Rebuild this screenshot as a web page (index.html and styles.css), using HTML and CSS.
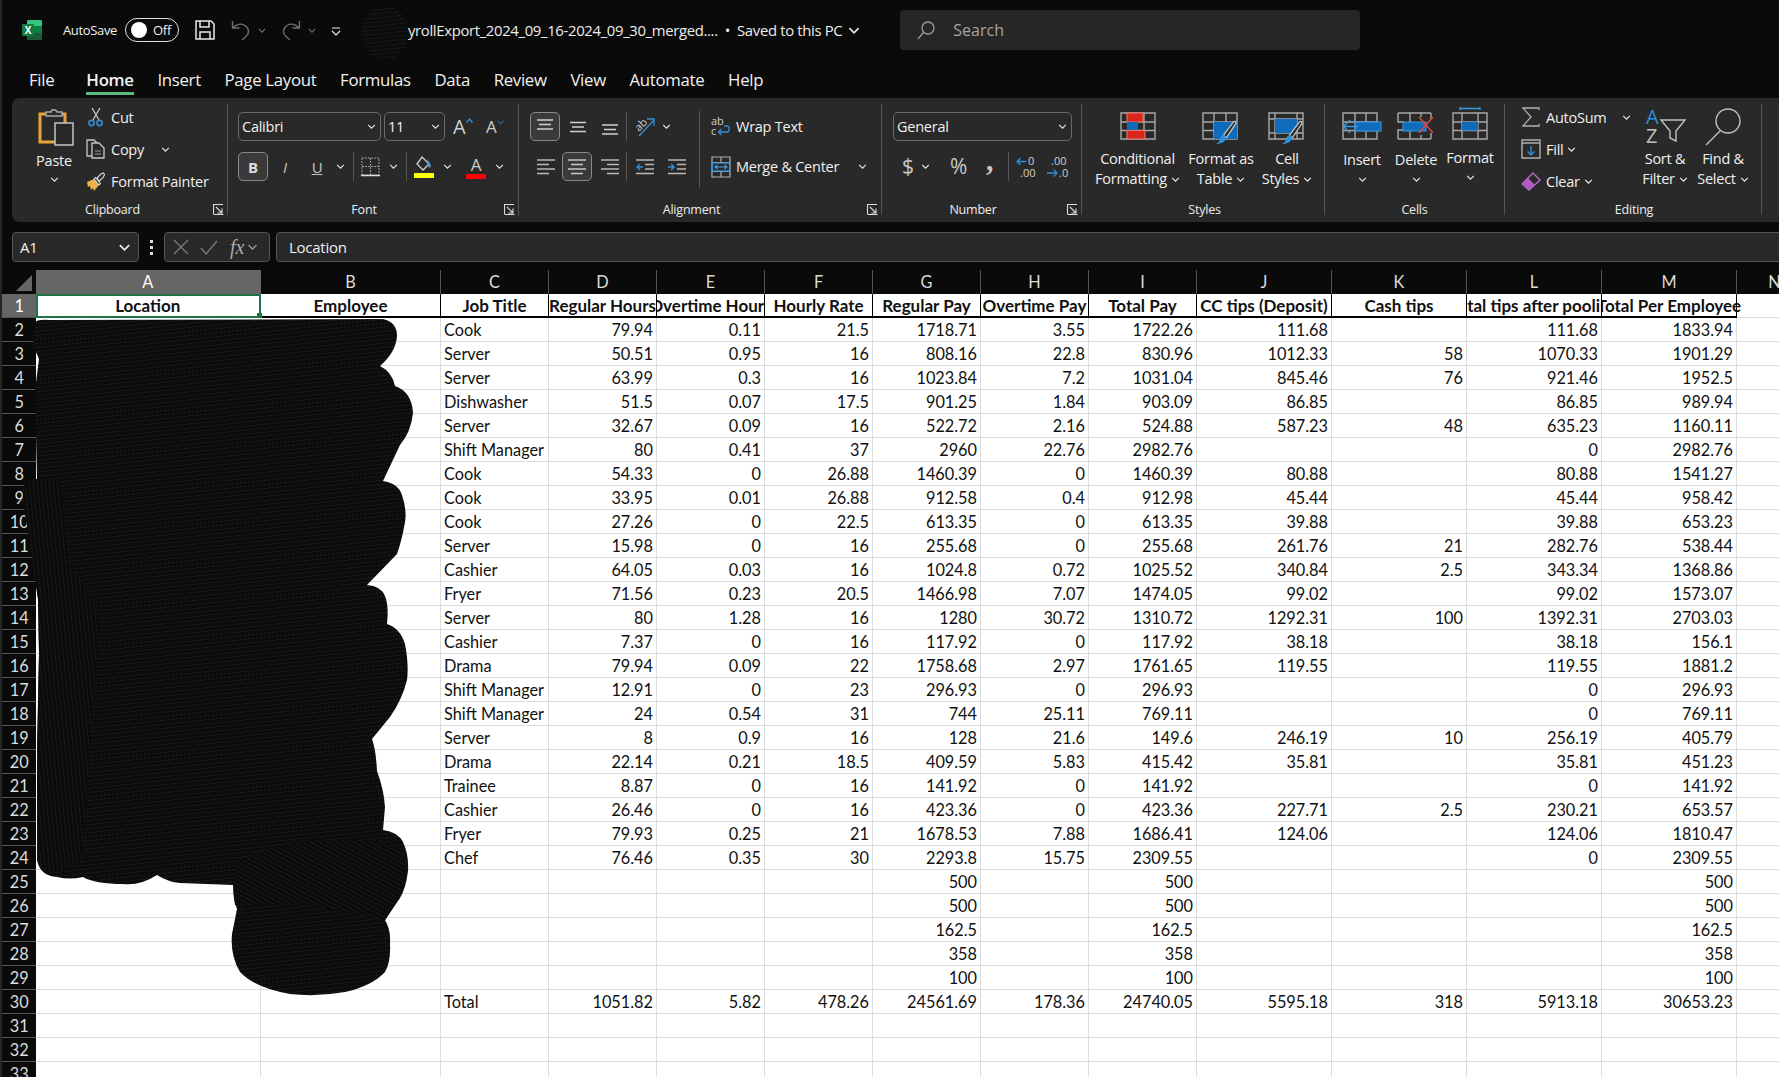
FILE: index.html
```html
<!DOCTYPE html>
<html lang="en">
<head>
<meta charset="utf-8">
<title>Excel</title>
<link rel="stylesheet" href="styles.css">
</head>
<body>
<svg class="defs" aria-hidden="true">
  <defs>
    <pattern id="scribble" width="4" height="4" patternUnits="userSpaceOnUse" patternTransform="rotate(-6)">
      <rect width="4" height="4" fill="#0a0a0a"/>
      <rect x="0" y="1" width="1" height="1" fill="#2c2c2c"/>
      <rect x="2" y="1" width="1" height="1" fill="#242424"/>
      <rect x="1" y="3" width="1" height="1" fill="#1a1a1a"/>
    </pattern>
    <pattern id="scribbleV" width="4" height="4" patternUnits="userSpaceOnUse" patternTransform="rotate(84)">
      <rect width="4" height="4" fill="#0a0a0a"/>
      <rect x="0" y="1" width="1" height="1" fill="#2a2a2a"/>
      <rect x="2" y="1" width="1" height="1" fill="#242424"/>
    </pattern>
    <pattern id="scribbleD" width="4" height="4" patternUnits="userSpaceOnUse" patternTransform="rotate(28)">
      <rect width="4" height="4" fill="#0a0a0a"/>
      <rect x="0" y="1" width="1" height="1" fill="#2a2a2a"/>
      <rect x="2" y="1" width="1" height="1" fill="#242424"/>
    </pattern>
    <symbol id="chev" viewBox="0 0 10 6"><path d="M1 1l4 4 4-4" fill="none" stroke="currentColor" stroke-width="1.4"/></symbol>
    <symbol id="launch" viewBox="0 0 11 11"><path d="M.5 10V.5H10M3 3l6 6M9 4.5V9H4.5M.5 10.5h10" fill="none" stroke="#ddd" stroke-width="1.1"/></symbol>
    <symbol id="atop" viewBox="0 0 18 18"><path d="M1 2H17M3 6.5H15M1 11H17" stroke="#d0d0d0" stroke-width="1.5"/></symbol>
    <symbol id="amid" viewBox="0 0 18 18"><path d="M1 4.5H17M3 9H15M1 13.5H17" stroke="#d0d0d0" stroke-width="1.5"/></symbol>
    <symbol id="abot" viewBox="0 0 18 18"><path d="M1 7H17M3 11.5H15M1 16H17" stroke="#d0d0d0" stroke-width="1.5"/></symbol>
    <symbol id="aleft" viewBox="0 0 18 18"><path d="M0 2H18M0 6.5H12M0 11H18M0 15.5H12" stroke="#b8b8b8" stroke-width="1.6"/></symbol>
    <symbol id="acent" viewBox="0 0 18 18"><path d="M0 2H18M3 6.5H15M0 11H18M3 15.5H15" stroke="#c8c8c8" stroke-width="1.6"/></symbol>
    <symbol id="aright" viewBox="0 0 18 18"><path d="M0 2H18M6 6.5H18M0 11H18M6 15.5H18" stroke="#b8b8b8" stroke-width="1.6"/></symbol>
    <symbol id="brush" viewBox="0 0 20 24"><path d="M19 1.5c.7.6.7 1.4.2 2.2L10.5 17l-3-2.3L17 2c.6-.7 1.3-1 2-.5z" fill="#292929" stroke="#c8c8c8" stroke-width="1.2"/><path d="M6 15c2-1.500 4.500 0 4 2.500-.6 3.500-5 5.500-9.500 5.500 2.500-1.500 3.500-2.500 3.700-4.700C4.300 17 5 15.800 6 15z" fill="#2f8fd8"/></symbol>
  </defs>
</svg>

<div class="app">
  <header class="titlebar">
    <svg class="xl" width="20" height="20" viewBox="0 0 20 20"><rect x="5" width="15" height="20" rx="1.500" fill="#21a366"/><rect x="5" width="15" height="6" rx="1.500" fill="#33c481"/><rect x="12" y="6" width="8" height="7" fill="#107c41"/><rect x="5" y="13" width="15" height="7" rx="1" fill="#185c37"/><rect y="4" width="12" height="12" rx="1" fill="#107c41"/><text x="6" y="13.500" class="xl-x">X</text></svg>
    <span class="autosave">AutoSave</span>
    <span class="toggle"><i class="knob"></i><span>Off</span></span>
    <svg class="save" width="20" height="20" viewBox="0 0 20 20"><path d="M1 1h15l3 3v15H1zM5 1v6h9V1M5 19v-7h10v7" fill="none" stroke="#e8e8e8" stroke-width="1.500"/></svg>
    <svg class="undo" width="20" height="20" viewBox="0 0 20 20"><path d="M1.500 1v7h7M2 8c3-4 8-5 12-2.500 4.500 3 4.500 8 1 11L11 20" fill="none" stroke="#6e6e6e" stroke-width="1.400"/></svg>
    <svg class="qchev" width="8" height="5"><use href="#chev"/></svg>
    <svg class="redo" width="20" height="20" viewBox="0 0 20 20"><path d="M18.500 1v7h-7M18 8c-3-4-8-5-12-2.500-4.500 3-4.500 8-1 11L9 20" fill="none" stroke="#6e6e6e" stroke-width="1.400"/></svg>
    <svg class="qchev" width="8" height="5"><use href="#chev"/></svg>
    <svg class="custom" width="10" height="9" viewBox="0 0 10 9"><path d="M1 1h8M1 4l4 4 4-4" fill="none" stroke="#e8e8e8" stroke-width="1.200"/></svg>
    <svg class="tblob" width="46" height="54" viewBox="0 0 46 54"><ellipse cx="23" cy="27" rx="23" ry="27" fill="url(#scribble)"/></svg>
    <span class="doc">yrollExport_2024_09_16-2024_09_30_merged.... &nbsp;• &nbsp;Saved to this PC</span>
    <svg class="docchev" width="12" height="7"><use href="#chev"/></svg>
    <div class="search">
      <svg width="18" height="19" viewBox="0 0 18 19"><circle cx="11" cy="7" r="6" fill="none" stroke="#9a9a9a" stroke-width="1.300"/><path d="M6.500 11.500L1 18" stroke="#9a9a9a" stroke-width="1.300"/></svg>
      <span>Search</span>
    </div>
  </header>

  <nav class="tabs">
    <span class="filetab">File</span><span class="on">Home</span><span>Insert</span><span>Page Layout</span><span>Formulas</span><span>Data</span><span>Review</span><span>View</span><span>Automate</span><span>Help</span>
  </nav>

  <section class="ribbon">
    <div class="group g-clip">
      <div class="body row">
        <div class="paste">
          <svg width="36" height="38" viewBox="0 0 36 38"><path d="M2 6h25v28H2z" fill="none" stroke="#e8a33d" stroke-width="3"/><path d="M8 8V4h5c.5-3 5-3 6 0h5v4z" fill="#292929" stroke="#a8a8a8" stroke-width="1.400"/><rect x="17" y="15" width="18" height="22" fill="#292929" stroke="#c4c4c4" stroke-width="1.500"/></svg>
          <span class="ptext">Paste</span>
          <svg class="chev" width="9" height="5"><use href="#chev"/></svg>
        </div>
        <div class="stack">
          <div class="line"><svg width="20" height="20" viewBox="0 0 20 20"><path d="M6 1l7 12M14 1L7 13" stroke="#c8c8c8" stroke-width="1.300"/><circle cx="5.500" cy="16" r="2.600" fill="none" stroke="#2f8fd8" stroke-width="1.600"/><circle cx="13.500" cy="16" r="2.600" fill="none" stroke="#2f8fd8" stroke-width="1.600"/></svg><span>Cut</span></div>
          <div class="line"><svg width="20" height="20" viewBox="0 0 20 20"><path d="M7 17H1V1h7l3 3" fill="none" stroke="#c8c8c8" stroke-width="1.300"/><path d="M6 4h7l5 5v10H6z" fill="#292929" stroke="#c8c8c8" stroke-width="1.300"/><path d="M9 12h6M9 15h6" stroke="#999" stroke-width="1.200"/></svg><span>Copy</span><svg class="chev copychev" width="9" height="5"><use href="#chev"/></svg></div>
          <div class="line"><svg width="20" height="20" viewBox="0 0 20 20"><path d="M1 11l7-3 5 6-5 6-1-3-2 2-1-4-2 1z" fill="#f0b04a"/><path d="M8 8l5 6 1.500-1.500-5-6zM11 7l4-4 2.500-1 1 1.500-1 2.500-4 4z" fill="#292929" stroke="#d8d8d8" stroke-width="1.100"/></svg><span>Format Painter</span></div>
        </div>
      </div>
      <div class="glabel">Clipboard</div>
      <svg class="launcher" width="11" height="11"><use href="#launch"/></svg>
    </div>

    <div class="group g-font">
      <div class="body rows">
        <div class="brow">
          <div class="combo w-name"><span>Calibri</span><svg width="9" height="5"><use href="#chev"/></svg></div>
          <div class="combo w-size"><span>11</span><svg width="9" height="5"><use href="#chev"/></svg></div>
          <span class="growA big">A<svg width="7" height="5" viewBox="0 0 7 5"><path d="M.5 4.500L3.500 1l3 3.500" fill="none" stroke="#2f8fd8" stroke-width="1.300"/></svg></span>
          <span class="growA small">A<svg width="7" height="5"><use href="#chev"/></svg></span>
        </div>
        <div class="brow">
          <span class="box bold">B</span>
          <span class="fmt ital">I</span>
          <span class="fmt under">U</span>
          <svg class="chev m-u" width="9" height="5"><use href="#chev"/></svg>
          <i class="vsep s-u"></i>
          <svg class="b-icon" width="19" height="20" viewBox="0 0 19 20"><path d="M1 1h17v17H1zM9.500 1v17M1 9.500h17" fill="none" stroke="#9a9a9a" stroke-width="1" stroke-dasharray="2 1"/><path d="M0 18.500h19" stroke="#e0e0e0" stroke-width="1.500"/></svg>
          <svg class="chev m-b" width="9" height="5"><use href="#chev"/></svg>
          <i class="vsep s-b"></i>
          <svg class="f-icon" width="20" height="22" viewBox="0 0 20 22"><path d="M8 1l7 7-6 6-6-6z" fill="none" stroke="#d0d0d0" stroke-width="1.300"/><path d="M13 3l2 3c2 2 2 5 1 6-2-1-2-4-3-9z" fill="#5aa0dc"/><rect y="17" width="20" height="5" fill="#ffff00"/></svg>
          <svg class="chev m-f" width="9" height="5"><use href="#chev"/></svg>
          <span class="colorA">A<i></i></span>
          <svg class="chev m-a" width="9" height="5"><use href="#chev"/></svg>
        </div>
      </div>
      <div class="glabel">Font</div>
      <svg class="launcher" width="11" height="11"><use href="#launch"/></svg>
    </div>

    <div class="group g-align">
      <div class="body row">
        <div class="rows">
          <div class="brow">
            <span class="box"><svg width="18" height="18"><use href="#atop"/></svg></span>
            <span class="slot"><svg width="18" height="18"><use href="#amid"/></svg></span>
            <span class="slot"><svg width="18" height="18"><use href="#abot"/></svg></span>
            <i class="vsep tall"></i>
            <svg class="orient" width="22" height="22" viewBox="0 0 22 22"><text x="2" y="13" class="mini" transform="rotate(-45 7 11)">ab</text><path d="M5 20L20 4M13 3h7v7" fill="none" stroke="#2f8fd8" stroke-width="1.300"/></svg>
            <svg class="chev orient-c" width="9" height="5"><use href="#chev"/></svg>
          </div>
          <div class="brow">
            <span class="slot"><svg width="18" height="18"><use href="#aleft"/></svg></span>
            <span class="box"><svg width="18" height="18"><use href="#acent"/></svg></span>
            <span class="slot"><svg width="18" height="18"><use href="#aright"/></svg></span>
            <i class="vsep tall"></i>
            <svg class="ind" width="18" height="18" viewBox="0 0 18 18"><path d="M0 2H18M9 6.500H18M9 11H18M0 15.500H18" stroke="#b8b8b8" stroke-width="1.500"/><path d="M7 9H1M4 6L1 9l3 3" fill="none" stroke="#2f8fd8" stroke-width="1.400"/></svg>
            <svg class="ind" width="18" height="18" viewBox="0 0 18 18"><path d="M0 2H18M9 6.500H18M9 11H18M0 15.500H18" stroke="#b8b8b8" stroke-width="1.500"/><path d="M0 9H6M3 6l3 3-3 3" fill="none" stroke="#2f8fd8" stroke-width="1.400"/></svg>
          </div>
        </div>
        <i class="vsep wide-sep"></i>
        <div class="rows wrapcol">
          <div class="textbtn"><svg width="20" height="20" viewBox="0 0 20 20"><text x="0" y="8" class="mini">ab</text><text x="0" y="18" class="mini">c</text><path d="M13 9h3c3 0 3 6 0 6H8M10.500 12L7.500 15l3 3" fill="none" stroke="#2f8fd8" stroke-width="1.300"/></svg><span>Wrap Text</span></div>
          <div class="textbtn"><svg width="20" height="22" viewBox="0 0 20 22"><path d="M1 1h18v20H1zM1 6.500h18M1 15.500h18M10 1v5.500M10 15.500V21" fill="none" stroke="#b0b0b0" stroke-width="1.200"/><rect x="1.500" y="7" width="17" height="8" fill="none" stroke="#2f8fd8" stroke-width="1.300"/><path d="M4 11h12M6.500 8.800L4 11l2.500 2.200M13.500 8.800L16 11l-2.500 2.200" fill="none" stroke="#4aa3e8" stroke-width="1.100"/></svg><span>Merge &amp; Center</span><svg class="chev merge-c" width="9" height="5"><use href="#chev"/></svg></div>
        </div>
      </div>
      <div class="glabel">Alignment</div>
      <svg class="launcher" width="11" height="11"><use href="#launch"/></svg>
    </div>

    <div class="group g-num">
      <div class="body rows">
        <div class="brow"><div class="combo w-gen"><span>General</span><svg width="9" height="5"><use href="#chev"/></svg></div></div>
        <div class="brow">
          <span class="sym dollar">$</span>
          <svg class="chev m-d" width="9" height="5"><use href="#chev"/></svg>
          <span class="sym pct">%</span>
          <span class="sym comma">,</span>
          <i class="vsep s-n"></i>
          <svg class="dec" width="20" height="24" viewBox="0 0 20 24"><text x="12" y="10" class="mini">0</text><text x="4" y="22" class="mini">.00</text><path d="M10 6.500H1M4.500 3L1 6.500 4.500 10" fill="none" stroke="#2f8fd8" stroke-width="1.300"/></svg>
          <svg class="dec d2" width="20" height="24" viewBox="0 0 20 24"><text x="5" y="10" class="mini">.00</text><text x="13" y="22" class="mini">.0</text><path d="M1 18h10M7.500 14.500L11 18l-3.500 3.500" fill="none" stroke="#2f8fd8" stroke-width="1.300"/></svg>
        </div>
      </div>
      <div class="glabel">Number</div>
      <svg class="launcher" width="11" height="11"><use href="#launch"/></svg>
    </div>

    <div class="group g-styles">
      <div class="body row">
        <div class="bigbtn w-cond">
          <svg width="36" height="28" viewBox="0 0 36 28"><path d="M1 1h34v26H1zM13 1v26M24 1v26M1 10h34M1 18.500h34" fill="none" stroke="#a8a8a8" stroke-width="1.400"/><rect x="7" y="1" width="16" height="9" fill="#d8261c" stroke="#f07a72"/><rect x="7" y="10" width="11" height="8.500" fill="#0f6cbd"/><rect x="7" y="18.500" width="18" height="8.500" fill="#d8261c" stroke="#f07a72"/></svg>
          <span>Conditional</span><span>Formatting<svg class="chev" width="9" height="5"><use href="#chev"/></svg></span>
        </div>
        <div class="bigbtn w-tab">
          <svg width="38" height="33" viewBox="0 0 38 33"><path d="M1 1h34v26H1zM12 1v26M24 1v26M1 10h34M1 18.500h34" fill="none" stroke="#a8a8a8" stroke-width="1.400"/><rect x="12" y="10" width="23" height="17" fill="#0f6cbd"/><use href="#brush" x="10" y="8" width="28" height="25"/></svg>
          <span>Format as</span><span>Table<svg class="chev" width="9" height="5"><use href="#chev"/></svg></span>
        </div>
        <div class="bigbtn w-cell">
          <svg width="38" height="33" viewBox="0 0 38 33"><path d="M1 1h34v26H1zM7 1v26M29 1v26M1 7h34M1 21h34" fill="none" stroke="#a8a8a8" stroke-width="1.400"/><rect x="7" y="7" width="22" height="14" fill="#0f6cbd"/><use href="#brush" x="10" y="8" width="28" height="25"/></svg>
          <span>Cell</span><span>Styles<svg class="chev" width="9" height="5"><use href="#chev"/></svg></span>
        </div>
      </div>
      <div class="glabel">Styles</div>
    </div>

    <div class="group g-cells">
      <div class="body row">
        <div class="cellbtn">
          <svg width="40" height="28" viewBox="0 0 40 28"><path d="M1 1h34v26H1zM13 1v26M24 1v26M1 10h34M1 18.500h34" fill="none" stroke="#a8a8a8" stroke-width="1.400"/><rect x="13" y="10" width="26" height="9" fill="#0f6cbd" stroke="#3a9be0"/><path d="M16 14.500H2M8 8l-6.500 6.500L8 21" fill="none" stroke="#3a9be0" stroke-width="1.500"/></svg>
          <span>Insert</span><svg class="chev" width="9" height="5"><use href="#chev"/></svg>
        </div>
        <div class="cellbtn">
          <svg width="38" height="28" viewBox="0 0 38 28"><path d="M1 1h33M1 1v9h6M1 27h33M1 27v-9h6M34 1v6M34 27v-6M13 1v9M24 1v4M13 18v9M24 23v4" fill="none" stroke="#a8a8a8" stroke-width="1.400"/><rect x="6" y="10" width="23" height="9" fill="#0f6cbd" stroke="#3a9be0"/><path d="M22 5l14 16M36 5L22 21" stroke="#e0453c" stroke-width="1.500"/></svg>
          <span>Delete</span><svg class="chev" width="9" height="5"><use href="#chev"/></svg>
        </div>
        <div class="cellbtn fmtbtn">
          <svg width="36" height="34" viewBox="0 0 36 34"><path d="M8 1v3M28 1v3M8 2.500h20" stroke="#3a9be0" stroke-width="1.300"/><path d="M1 7h34v26H1zM10 7v26M26 7v26M1 16h34M1 24.500h34" fill="none" stroke="#a8a8a8" stroke-width="1.400"/><rect x="10" y="16" width="16" height="8.500" fill="#0f6cbd"/></svg>
          <span>Format</span><svg class="chev" width="9" height="5"><use href="#chev"/></svg>
        </div>
      </div>
      <div class="glabel">Cells</div>
    </div>

    <div class="group g-edit">
      <div class="body row">
        <div class="stack estack">
          <div class="line"><svg width="20" height="20" viewBox="0 0 20 20"><path d="M18 3V1H2l8 9-8 9h16v-2" fill="none" stroke="#b0b0b0" stroke-width="1.300"/></svg><span>AutoSum</span><svg class="chev sum-c" width="9" height="5"><use href="#chev"/></svg></div>
          <div class="line"><svg width="20" height="20" viewBox="0 0 20 20"><path d="M1 1h18v18H1zM1 4h18" fill="none" stroke="#b0b0b0" stroke-width="1.400"/><path d="M10 7v9M6.500 12.500L10 16l3.500-3.500" fill="none" stroke="#2f8fd8" stroke-width="1.400"/></svg><span>Fill</span><svg class="chev tight" width="9" height="5"><use href="#chev"/></svg></div>
          <div class="line"><svg width="20" height="20" viewBox="0 0 20 20"><path d="M1 13L12 2l7 7L8 19z" fill="none" stroke="#b868c8" stroke-width="1.400"/><path d="M1 13l6-6 7 7-6 5z" fill="#b05cc0"/></svg><span>Clear</span><svg class="chev tight" width="9" height="5"><use href="#chev"/></svg></div>
        </div>
        <div class="bigbtn w-sort">
          <svg width="44" height="36" viewBox="0 0 44 36"><text x="3" y="16" class="az a">A</text><text x="3" y="35" class="az">Z</text><path d="M18 12h24L33 23v10l-6-3v-7z" fill="none" stroke="#c0c0c0" stroke-width="1.400"/></svg>
          <span>Sort &amp;</span><span>Filter<svg class="chev" width="9" height="5"><use href="#chev"/></svg></span>
        </div>
        <div class="bigbtn w-find">
          <svg width="36" height="38" viewBox="0 0 36 38"><circle cx="23" cy="13" r="12" fill="none" stroke="#c0c0c0" stroke-width="1.400"/><path d="M15 23L1 37" stroke="#c0c0c0" stroke-width="1.400"/></svg>
          <span>Find &amp;</span><span>Select<svg class="chev" width="9" height="5"><use href="#chev"/></svg></span>
        </div>
      </div>
      <div class="glabel">Editing</div>
    </div>
  </section>

  <section class="fbar">
    <div class="namebox"><span>A1</span><svg width="13" height="7"><use href="#chev"/></svg></div>
    <div class="dots"><i></i><i></i><i></i></div>
    <div class="fxbox">
      <svg width="16" height="16" viewBox="0 0 16 16"><path d="M1 1l14 14M15 1L1 15" stroke="#7c7c7c" stroke-width="1.300"/></svg>
      <svg class="tick" width="18" height="15" viewBox="0 0 18 15"><path d="M1 8l5 6L17 1" fill="none" stroke="#7c7c7c" stroke-width="1.300"/></svg>
      <span class="fx">fx</span>
      <svg width="11" height="6"><use href="#chev"/></svg>
    </div>
    <div class="finput">Location</div>
  </section>

  <section class="sheet">
    <table class="grid">
      <colgroup><col class="col-rh"><col class="col-a"><col class="col-b"><col class="col-n"><col class="col-n"><col class="col-n"><col class="col-n"><col class="col-n"><col class="col-n"><col class="col-n"><col class="col-w"><col class="col-w"><col class="col-w"><col class="col-w"><col class="col-x"></colgroup>
      <thead><tr><th class="corner"><svg width="16" height="16" viewBox="0 0 16 16"><path d="M16 0v16H0z" fill="#666"/></svg></th><th class="act">A</th><th>B</th><th>C</th><th>D</th><th>E</th><th>F</th><th>G</th><th>H</th><th>I</th><th>J</th><th>K</th><th>L</th><th>M</th><th>N</th></tr></thead>
      <tbody>
        <tr class="h1"><th class="act">1</th><td class="sel"><div>Location</div></td><td><div>Employee</div></td><td><div>Job Title</div></td><td><div>Regular Hours</div></td><td><div>Overtime Hours</div></td><td><div>Hourly Rate</div></td><td><div>Regular Pay</div></td><td><div>Overtime Pay</div></td><td><div>Total Pay</div></td><td><div>CC tips (Deposit)</div></td><td><div>Cash tips</div></td><td><div>Total tips after pooling</div></td><td class="spill"><div>Total Per Employee</div></td><td class="plain"></td></tr>
        <tr><th>2</th><td></td><td></td><td>Cook</td><td>79.94</td><td>0.11</td><td>21.5</td><td>1718.71</td><td>3.55</td><td>1722.26</td><td>111.68</td><td></td><td>111.68</td><td>1833.94</td><td></td></tr>
        <tr><th>3</th><td></td><td></td><td>Server</td><td>50.51</td><td>0.95</td><td>16</td><td>808.16</td><td>22.8</td><td>830.96</td><td>1012.33</td><td>58</td><td>1070.33</td><td>1901.29</td><td></td></tr>
        <tr><th>4</th><td></td><td></td><td>Server</td><td>63.99</td><td>0.3</td><td>16</td><td>1023.84</td><td>7.2</td><td>1031.04</td><td>845.46</td><td>76</td><td>921.46</td><td>1952.5</td><td></td></tr>
        <tr><th>5</th><td></td><td></td><td>Dishwasher</td><td>51.5</td><td>0.07</td><td>17.5</td><td>901.25</td><td>1.84</td><td>903.09</td><td>86.85</td><td></td><td>86.85</td><td>989.94</td><td></td></tr>
        <tr><th>6</th><td></td><td></td><td>Server</td><td>32.67</td><td>0.09</td><td>16</td><td>522.72</td><td>2.16</td><td>524.88</td><td>587.23</td><td>48</td><td>635.23</td><td>1160.11</td><td></td></tr>
        <tr><th>7</th><td></td><td></td><td>Shift Manager</td><td>80</td><td>0.41</td><td>37</td><td>2960</td><td>22.76</td><td>2982.76</td><td></td><td></td><td>0</td><td>2982.76</td><td></td></tr>
        <tr><th>8</th><td></td><td></td><td>Cook</td><td>54.33</td><td>0</td><td>26.88</td><td>1460.39</td><td>0</td><td>1460.39</td><td>80.88</td><td></td><td>80.88</td><td>1541.27</td><td></td></tr>
        <tr><th>9</th><td></td><td></td><td>Cook</td><td>33.95</td><td>0.01</td><td>26.88</td><td>912.58</td><td>0.4</td><td>912.98</td><td>45.44</td><td></td><td>45.44</td><td>958.42</td><td></td></tr>
        <tr><th>10</th><td></td><td></td><td>Cook</td><td>27.26</td><td>0</td><td>22.5</td><td>613.35</td><td>0</td><td>613.35</td><td>39.88</td><td></td><td>39.88</td><td>653.23</td><td></td></tr>
        <tr><th>11</th><td></td><td></td><td>Server</td><td>15.98</td><td>0</td><td>16</td><td>255.68</td><td>0</td><td>255.68</td><td>261.76</td><td>21</td><td>282.76</td><td>538.44</td><td></td></tr>
        <tr><th>12</th><td></td><td></td><td>Cashier</td><td>64.05</td><td>0.03</td><td>16</td><td>1024.8</td><td>0.72</td><td>1025.52</td><td>340.84</td><td>2.5</td><td>343.34</td><td>1368.86</td><td></td></tr>
        <tr><th>13</th><td></td><td></td><td>Fryer</td><td>71.56</td><td>0.23</td><td>20.5</td><td>1466.98</td><td>7.07</td><td>1474.05</td><td>99.02</td><td></td><td>99.02</td><td>1573.07</td><td></td></tr>
        <tr><th>14</th><td></td><td></td><td>Server</td><td>80</td><td>1.28</td><td>16</td><td>1280</td><td>30.72</td><td>1310.72</td><td>1292.31</td><td>100</td><td>1392.31</td><td>2703.03</td><td></td></tr>
        <tr><th>15</th><td></td><td></td><td>Cashier</td><td>7.37</td><td>0</td><td>16</td><td>117.92</td><td>0</td><td>117.92</td><td>38.18</td><td></td><td>38.18</td><td>156.1</td><td></td></tr>
        <tr><th>16</th><td></td><td></td><td>Drama</td><td>79.94</td><td>0.09</td><td>22</td><td>1758.68</td><td>2.97</td><td>1761.65</td><td>119.55</td><td></td><td>119.55</td><td>1881.2</td><td></td></tr>
        <tr><th>17</th><td></td><td></td><td>Shift Manager</td><td>12.91</td><td>0</td><td>23</td><td>296.93</td><td>0</td><td>296.93</td><td></td><td></td><td>0</td><td>296.93</td><td></td></tr>
        <tr><th>18</th><td></td><td></td><td>Shift Manager</td><td>24</td><td>0.54</td><td>31</td><td>744</td><td>25.11</td><td>769.11</td><td></td><td></td><td>0</td><td>769.11</td><td></td></tr>
        <tr><th>19</th><td></td><td></td><td>Server</td><td>8</td><td>0.9</td><td>16</td><td>128</td><td>21.6</td><td>149.6</td><td>246.19</td><td>10</td><td>256.19</td><td>405.79</td><td></td></tr>
        <tr><th>20</th><td></td><td></td><td>Drama</td><td>22.14</td><td>0.21</td><td>18.5</td><td>409.59</td><td>5.83</td><td>415.42</td><td>35.81</td><td></td><td>35.81</td><td>451.23</td><td></td></tr>
        <tr><th>21</th><td></td><td></td><td>Trainee</td><td>8.87</td><td>0</td><td>16</td><td>141.92</td><td>0</td><td>141.92</td><td></td><td></td><td>0</td><td>141.92</td><td></td></tr>
        <tr><th>22</th><td></td><td></td><td>Cashier</td><td>26.46</td><td>0</td><td>16</td><td>423.36</td><td>0</td><td>423.36</td><td>227.71</td><td>2.5</td><td>230.21</td><td>653.57</td><td></td></tr>
        <tr><th>23</th><td></td><td></td><td>Fryer</td><td>79.93</td><td>0.25</td><td>21</td><td>1678.53</td><td>7.88</td><td>1686.41</td><td>124.06</td><td></td><td>124.06</td><td>1810.47</td><td></td></tr>
        <tr><th>24</th><td></td><td></td><td>Chef</td><td>76.46</td><td>0.35</td><td>30</td><td>2293.8</td><td>15.75</td><td>2309.55</td><td></td><td></td><td>0</td><td>2309.55</td><td></td></tr>
        <tr><th>25</th><td></td><td></td><td></td><td></td><td></td><td></td><td>500</td><td></td><td>500</td><td></td><td></td><td></td><td>500</td><td></td></tr>
        <tr><th>26</th><td></td><td></td><td></td><td></td><td></td><td></td><td>500</td><td></td><td>500</td><td></td><td></td><td></td><td>500</td><td></td></tr>
        <tr><th>27</th><td></td><td></td><td></td><td></td><td></td><td></td><td>162.5</td><td></td><td>162.5</td><td></td><td></td><td></td><td>162.5</td><td></td></tr>
        <tr><th>28</th><td></td><td></td><td></td><td></td><td></td><td></td><td>358</td><td></td><td>358</td><td></td><td></td><td></td><td>358</td><td></td></tr>
        <tr><th>29</th><td></td><td></td><td></td><td></td><td></td><td></td><td>100</td><td></td><td>100</td><td></td><td></td><td></td><td>100</td><td></td></tr>
        <tr><th>30</th><td></td><td></td><td>Total</td><td>1051.82</td><td>5.82</td><td>478.26</td><td>24561.69</td><td>178.36</td><td>24740.05</td><td>5595.18</td><td>318</td><td>5913.18</td><td>30653.23</td><td></td></tr>
        <tr><th>31</th><td></td><td></td><td></td><td></td><td></td><td></td><td></td><td></td><td></td><td></td><td></td><td></td><td></td><td></td></tr>
        <tr><th>32</th><td></td><td></td><td></td><td></td><td></td><td></td><td></td><td></td><td></td><td></td><td></td><td></td><td></td><td></td></tr>
        <tr><th>33</th><td></td><td></td><td></td><td></td><td></td><td></td><td></td><td></td><td></td><td></td><td></td><td></td><td></td><td></td></tr>
      </tbody>
    </table>
    <svg class="blob" width="450" height="740" viewBox="0 270 450 740" aria-hidden="true">
      <path d="M35 323Q36 319 50 320L383 319Q397 322 397 336Q396 352 380 366Q392 372 395 386Q412 392 413 413Q411 432 400 445L383 481Q398 483 402 495Q407 510 405 522Q402 540 397 554L367 585Q381 586 385 596Q389 606 387 624Q400 628 405 644Q409 665 407 680Q402 700 390 717L372 739Q376 750 377 771Q384 790 385 807L383 830Q398 832 403 842Q409 855 408 871Q406 888 400 898L385 920Q391 930 390 943Q391 962 385 972Q372 986 345 992Q317 997 290 994Q255 988 240 972Q230 955 232 934L237 909Q233 900 233 885L180 883Q168 882 157 875Q140 886 123 884Q95 884 83 877Q70 880 57 877Q40 876 37 860L37 753L39 653L38 599L23 499Q22 483 27 481L37 479L35 390L39 359L33 345Z" fill="url(#scribble)"/>
      <path d="M27 481L37 479L60 480L70 560L100 620L82 860Q60 878 40 868L37 753L39 653L38 599L23 499Z" fill="url(#scribbleV)"/>
      <path d="M240 860Q300 830 400 845Q412 870 398 900L385 920Q300 900 235 905Q232 885 240 860Z" fill="url(#scribbleD)"/>
    </svg>
  </section>
</div>
</body>
</html>
```
FILE: styles.css
```css
* { box-sizing: border-box; }
html, body { margin: 0; padding: 0; background: #0a0a0a; overflow: hidden; }
.defs { position: absolute; width: 0; height: 0; }
.app {
  width: 1779px; height: 1077px; overflow: hidden; display: flex; flex-direction: column;
  background: #0a0a0a; color: #f0f0f0; border-left: 2px solid #262626;
  font: 14.5px "Open Sans", sans-serif; letter-spacing: -.25px;
}
svg { flex: none; display: block; overflow: visible; }
i { font-style: normal; }
.mini { font-size: 11px; fill: #cfcfcf; letter-spacing: 0; }

/* Title bar */
.titlebar { height: 60px; flex: none; display: flex; align-items: center; padding-left: 20px; }
.xl-x { font: 700 10px "Open Sans", sans-serif; fill: #fff; text-anchor: middle; letter-spacing: 0; }
.autosave { margin-left: 21px; width: 62px; font-size: 13px; letter-spacing: -.35px; color: #f0f0f0; }
.toggle { width: 54px; height: 24px; border: 1.5px solid #e0e0e0; border-radius: 12px; display: flex; align-items: center; padding-left: 5px; font-size: 13px; }
.toggle span { margin-left: 6px; }
.knob { width: 16px; height: 16px; border-radius: 50%; background: #fff; }
.save { margin-left: 16px; }
.undo { margin-left: 16px; }
.qchev { margin-left: 7px; color: #6e6e6e; }
.redo { margin-left: 15px; }
.custom { margin-left: 15px; margin-top: 2px; }
.tblob { margin-left: 21px; margin-top: 5px; }
.doc { font-size: 14.9px; letter-spacing: -.35px; white-space: nowrap; color: #ededed; }
.docchev { margin-left: 6px; color: #e8e8e8; }
.search { margin-left: 40px; width: 460px; height: 40px; background: #262626; border-radius: 4px; display: flex; align-items: center; padding-left: 17px; gap: 18px; color: #a4a4a4; font-size: 16px; letter-spacing: 0; }

/* Tabs */
.tabs { height: 38px; flex: none; display: flex; gap: 23.7px; padding-left: 27px; font-size: 16.8px; align-items: center; color: #f2f2f2; letter-spacing: -.3px; }
.tabs span { height: 38px; line-height: 40px; }
.tabs .filetab { margin-right: 8.3px; }
.tabs .on { font-weight: 600; border-bottom: 3px solid #5fb97e; height: 35px; margin-top: -3px; }

/* Ribbon */
.ribbon { height: 124px; flex: none; margin-left: 10px; padding: 6px 0 7px; display: flex; background: #292929; border-radius: 8px 0 0 8px; }
.group { position: relative; height: 111px; border-right: 1px solid #555; flex: none; }
.body { height: 95px; }
.glabel { height: 16px; line-height: 22px; text-align: center; font-size: 12.5px; color: #ededed; letter-spacing: -.2px; }
.launcher { position: absolute; right: 3px; bottom: 0; }
.g-clip { width: 216px; }
.g-font { width: 291px; padding-left: 10px; }
.g-align { width: 363px; padding-left: 11px; }
.g-num { width: 200px; padding-left: 11px; }
.g-styles { width: 243px; padding-left: 13px; }
.g-cells { width: 180px; padding-left: 10px; }
.g-edit { width: 257px; padding-left: 16px; }
.g-font .glabel, .g-align .glabel, .g-num .glabel, .g-styles .glabel, .g-cells .glabel, .g-edit .glabel { margin-left: -10px; }
.g-clip .glabel { margin-right: 14px; }
.g-font .glabel, .g-align .glabel, .g-num .glabel { margin-right: 18px; }
.g-edit .glabel { margin-right: 4px; }
.row { display: flex; }
.rows { display: flex; flex-direction: column; gap: 11px; padding-top: 8px; }
.brow { height: 29px; display: flex; align-items: center; }
.chev, .combo svg { color: #e8e8e8; }

/* Clipboard */
.paste { margin-left: 12px; width: 60px; display: flex; flex-direction: column; align-items: center; padding-top: 4px; }
.paste > svg:first-child { margin-left: 4px; }
.ptext { margin-top: 5px; line-height: 20px; }
.paste .chev { margin-top: 6px; }
.stack { margin-left: 2px; margin-top: -3px; display: grid; grid-template-rows: repeat(3, 32px); }
.line { display: flex; align-items: center; gap: 5px; white-space: nowrap; }
.copychev { margin-left: 12px; }

/* Font */
.combo { height: 29px; border: 1px solid #6a6a6a; border-radius: 5px; display: flex; align-items: center; justify-content: space-between; padding: 0 4px 0 3px; }
.w-name { width: 143px; }
.w-size { width: 61px; margin-left: 3px; }
.w-gen { width: 179px; }
.growA { position: relative; display: flex; color: #cfcfcf; width: 27px; align-items: flex-start; letter-spacing: 0; }
.growA svg { margin-top: 5px; color: #2f8fd8; }
.growA.big { margin-left: 8px; font-size: 20px; }
.growA.small { margin-left: 6px; font-size: 17px; }
.box { width: 30px; height: 29px; border: 1px solid #8a8a8a; border-radius: 5px; background: #3a3a3a; display: flex; align-items: center; justify-content: center; flex: none; }
.bold { font-weight: 700; font-size: 15px; color: #ddd; }
.fmt { width: 32px; flex: none; text-align: center; font-size: 15px; color: #c8c8c8; }
.ital { font-style: italic; margin-left: 1px; }
.under { text-decoration: underline; }
.m-u { margin-left: 3px; }
.vsep { display: block; width: 1px; height: 29px; background: #555; flex: none; }
.s-u { margin-left: 8px; }
.b-icon { margin-left: 7px; }
.m-b { margin-left: 9px; }
.s-b { margin-left: 8px; }
.f-icon { margin-left: 7px; }
.m-f { margin-left: 9px; }
.colorA { margin-left: 14px; width: 20px; height: 24px; display: flex; flex-direction: column; align-items: center; font-size: 17px; line-height: 19px; color: #cfcfcf; letter-spacing: 0; flex: none; }
.colorA i { width: 20px; height: 5px; background: #f00; flex: none; }
.m-a { margin-left: 9px; }

/* Alignment */
.slot { width: 32px; height: 29px; display: flex; align-items: center; justify-content: center; flex: none; }
.g-align .box { width: 30px; margin-right: 2px; }
.orient { margin-left: 7px; }
.orient-c { margin-left: 6px; }
.ind { margin-left: 9px; }
.ind + .ind { margin-left: 14px; }
.wide-sep { height: 77px; margin: 7px 0 0 71px; }
.g-align .rows:first-child { width: 98px; }
.wrapcol { margin-left: 11px; gap: 11px; }
.textbtn { display: flex; align-items: center; gap: 5px; height: 29px; white-space: nowrap; }
.merge-c { margin-left: 14px; }

/* Number */
.sym { color: #c8c8c8; letter-spacing: 0; line-height: 29px; flex: none; }
.dollar { font-size: 21px; margin-left: 9px; width: 12px; }
.m-d { margin-left: 7px; }
.pct { font-size: 21px; margin-left: 20px; width: 24px; }
.comma { font: 700 30px "Liberation Serif", serif; margin: 0 0 14px 12px; width: 13px; line-height: 20px; }
.s-n { margin-left: 9px; }
.dec { margin-left: 7px; }
.d2 { margin-left: 10px; }

/* Big buttons */
.bigbtn { display: flex; flex-direction: column; align-items: center; height: 95px; line-height: 20px; padding-top: 2px; flex: none; position: relative; }
.bigbtn span { display: flex; align-items: center; gap: 4px; white-space: nowrap; }
.w-cond { width: 85px; }
.w-cond > svg:first-child { margin: 6px 0 9px; }
.w-tab { width: 72px; margin-left: 5px; }
.w-tab > svg:first-child, .w-cell > svg:first-child { margin: 6px 0 4px; }
.w-cell { width: 60px; }
.cellbtn { width: 54px; display: flex; flex-direction: column; align-items: center; padding-top: 8px; line-height: 20px; }
.cellbtn > svg:first-child { margin-bottom: 10px; }
.cellbtn .chev { margin-top: 7px; }
.fmtbtn { padding-top: 2px; }
.fmtbtn > svg:first-child { margin-bottom: 8px; }
.estack { margin-left: 0; width: 115px; flex: none; }
.sum-c { margin-left: 11px; }
.tight { margin-left: -1px; }
.az { font-size: 20px; fill: #c0c0c0; letter-spacing: 0; }
.az.a { fill: #2f8fd8; }
.w-sort { width: 58px; }
.w-find { width: 58px; }
.w-sort > svg:first-child { margin: 2px 0 5px; }
.w-find > svg:first-child { margin: 2px 0 3px; }

/* Formula bar */
.fbar { height: 30px; flex: none; margin: 10px 0 8px 10px; display: flex; }
.namebox, .fxbox, .finput { height: 30px; background: #292929; border: 1px solid #555; border-radius: 4px; display: flex; align-items: center; flex: none; }
.namebox { width: 127px; padding: 0 7px; justify-content: space-between; font-size: 15px; }
.dots { width: 25px; display: flex; flex-direction: column; align-items: center; justify-content: center; gap: 3px; flex: none; }
.dots i { width: 3px; height: 3px; background: #ddd; }
.fxbox { width: 106px; padding-left: 8px; color: #9a9a9a; }
.tick { margin-left: 11px; }
.fx { font: italic 20px "Liberation Serif", serif; color: #aaa; margin: 0 3px 0 12px; letter-spacing: 0; }
.finput { width: 1560px; margin-left: 6px; padding-left: 12px; font-size: 15px; }

/* Sheet */
.sheet { position: relative; flex: 1; overflow: hidden; }
.grid { border-collapse: separate; border-spacing: 0; table-layout: fixed; width: 1811px; font: 16.3px "Lato", sans-serif; letter-spacing: 0; color: #111; }
.col-rh { width: 33.5px; }
.col-a { width: 225.5px; }
.col-b { width: 180px; }
.col-n { width: 108px; }
.col-w { width: 135px; }
.col-x { width: 76px; }
thead th { height: 24px; background: #0a0a0a; color: #dcdcdc; font-weight: 400; border-right: 1px solid #555; padding: 0 0 2px; text-align: center; }
thead th.act { background: #666; color: #fff; border-right-color: #666; }
.corner { border-right: 0 !important; padding: 0 !important; }
.corner svg { margin: 2px 0 0 14px; }
tbody th { height: 24px; background: #0a0a0a; color: #dcdcdc; font-weight: 400; border-bottom: 1px solid #555; padding: 0 0 0 1px; text-align: center; }
tbody th.act { background: #666; color: #fff; }
td { height: 24px; background: #fff; border-right: 1px solid #dcdcdc; border-bottom: 1px solid #dcdcdc; padding: 0 3px; text-align: right; white-space: nowrap; overflow: hidden; }
td:nth-child(4) { text-align: left; }
.h1 td { padding: 0; font-weight: 700; font-size: 17px; border-right-color: #000; border-bottom: 2px solid #000; }
.h1 td div { display: flex; justify-content: center; overflow: hidden; }
.h1 td.plain { border-color: #dcdcdc; border-bottom-width: 1px; }
.h1 td.spill { overflow: visible; }
.h1 td.spill div { overflow: visible; clip-path: inset(0 -60px 0 0); }
.sel { position: relative; overflow: visible !important; outline: 2px solid #217346; outline-offset: -2px; }
.sel::after { content: ""; position: absolute; right: -2px; bottom: -2px; width: 5px; height: 5px; background: #217346; }
.blob { position: absolute; left: -2px; top: 0; }
```
